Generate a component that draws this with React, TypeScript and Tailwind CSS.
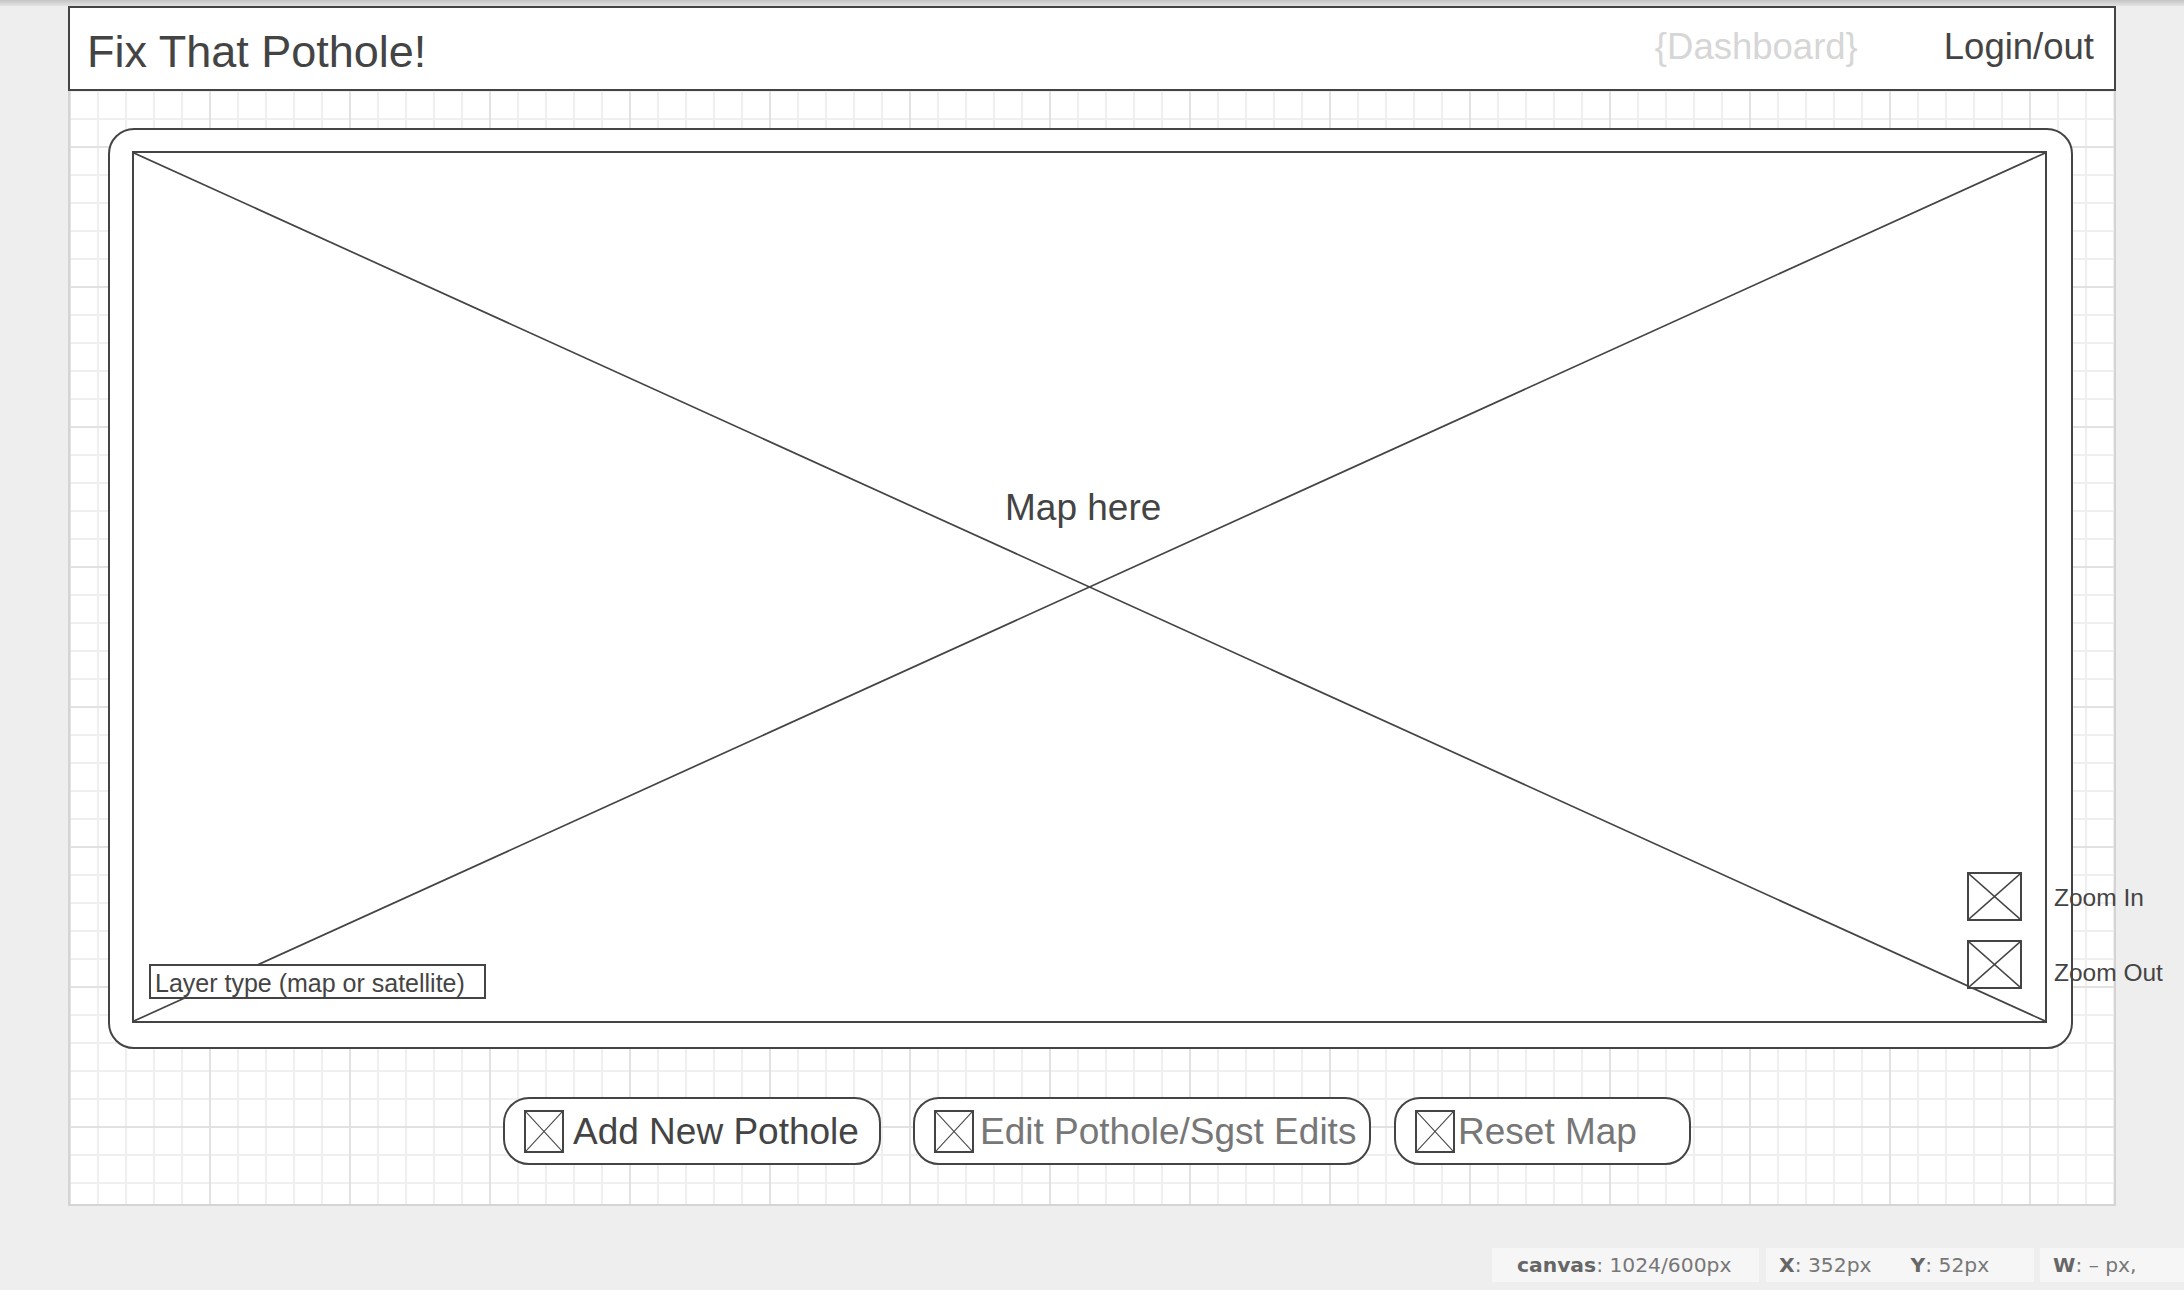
import React from 'react';

// wireframe placeholder "X" drawn corner to corner of its parent
function Cross({ stroke = 1.6 }: { stroke?: number }) {
  return (
    <svg
      className="absolute inset-0 h-full w-full"
      viewBox="0 0 100 100"
      preserveAspectRatio="none"
    >
      <line x1="0" y1="0" x2="100" y2="100" stroke="#444" strokeWidth={stroke} vectorEffect="non-scaling-stroke" />
      <line x1="100" y1="0" x2="0" y2="100" stroke="#444" strokeWidth={stroke} vectorEffect="non-scaling-stroke" />
    </svg>
  );
}

function IconBox({ className, stroke }: { className: string; stroke?: number }) {
  return (
    <div className={`relative shrink-0 border-2 border-[#444] bg-white ${className}`}>
      <Cross stroke={stroke} />
    </div>
  );
}

function ActionButton({
  label,
  className,
  textClass,
}: {
  label: string;
  className: string;
  textClass: string;
}) {
  return (
    <button
      type="button"
      className={`flex h-[68px] shrink-0 items-center rounded-[26px] border-2 border-[#444] bg-white pl-[19px] ${className}`}
    >
      <IconBox className="h-[43px] w-[40px]" stroke={1.1} />
      <span className={`whitespace-nowrap text-[37px] leading-none ${textClass}`}>{label}</span>
    </button>
  );
}

export default function App() {
  return (
    <div className="h-[1290px] w-[2184px] overflow-hidden bg-[#eeeeee] font-['Liberation_Sans',Arial,sans-serif] text-[#444]">
      <div className="h-[6px] bg-linear-to-b from-[#c4c4c4] to-[#e3e3e3]" />

      <div className="ml-[68px] w-[2048px]">
        <header className="flex h-[85px] items-start border-2 border-[#444] bg-white pl-[17px] pr-[20px] pt-[20px]">
          <h1 className="mt-[1px] text-[45px] font-normal leading-none">Fix That Pothole!</h1>
          <span className="ml-auto mt-[1px] text-[36.5px] leading-none text-[#d6d6d6]">{'{Dashboard}'}</span>
          <span className="ml-[86px] mt-[1px] text-[36.5px] leading-none">Login/out</span>
        </header>

        <main className="h-[1115px] border-x-2 border-b-2 border-[#d4d4d4] bg-white bg-[linear-gradient(to_right,#e2e2e2_2px,transparent_2px),linear-gradient(to_bottom,#e2e2e2_2px,transparent_2px),linear-gradient(to_right,#efefef_2px,transparent_2px),linear-gradient(to_bottom,#efefef_2px,transparent_2px)] bg-[size:140px_140px,140px_140px,28px_28px,28px_28px] bg-[position:-1px_55px] pl-[38px] pt-[37px]">
          <section className="h-[921px] w-[1965px] rounded-[26px] border-2 border-[#444] bg-white pb-[24px] pl-[22px] pr-[24px] pt-[21px]">
            <div className="relative h-full w-full border-2 border-[#444] bg-white">
              <Cross stroke={1.7} />

              <span className="absolute left-[871px] top-[336px] whitespace-nowrap text-[37px] leading-none">
                Map here
              </span>

              <div className="absolute left-[15px] top-[811px] h-[35px] w-[337px] border-2 border-[#444] bg-white pl-[4px] pt-[5px] text-[25px] leading-none whitespace-nowrap">
                Layer type (map or satellite)
              </div>

              <IconBox className="absolute! left-[1833px] top-[719px] h-[49px] w-[55px]" stroke={1.6} />
              <IconBox className="absolute! left-[1833px] top-[787px] h-[49px] w-[55px]" stroke={1.6} />

              <span className="absolute left-[1920px] top-[733px] whitespace-nowrap text-[24.5px] leading-none">
                Zoom In
              </span>
              <span className="absolute left-[1920px] top-[808px] whitespace-nowrap text-[24.5px] leading-none">
                Zoom Out
              </span>
            </div>
          </section>

          <div className="ml-[395px] mt-[48px] flex">
            <ActionButton label="Add New Pothole" className="w-[378px]" textClass="ml-[9px] text-[#444]" />
            <ActionButton label="Edit Pothole/Sgst Edits" className="ml-[32px] w-[458px]" textClass="ml-[6px] text-[#777]" />
            <ActionButton label="Reset Map" className="ml-[23px] w-[297px]" textClass="ml-[3px] text-[#777]" />
          </div>
        </main>
      </div>

      <footer className="ml-[1492px] mt-[42px] flex h-[34px] font-['DejaVu_Sans',sans-serif] text-[20.3px] leading-none text-[#777]">
        <div className="flex w-[267px] shrink-0 items-center bg-[#f6f6f6] pl-[25px] whitespace-nowrap">
          <b className="font-bold text-[#666]">canvas</b>: 1024/600px
        </div>
        <div className="ml-[7px] flex w-[268px] shrink-0 items-center bg-[#f6f6f6] pl-[13px] whitespace-nowrap">
          <b className="font-bold text-[#666]">X</b>: 352px
          <b className="ml-[39px] font-bold text-[#666]">Y</b>: 52px
        </div>
        <div className="ml-[6px] flex w-[300px] shrink-0 items-center bg-[#f6f6f6] pl-[13px] whitespace-nowrap">
          <b className="font-bold text-[#666]">W</b>: – px,
          <b className="ml-[48px] font-bold text-[#666]">H</b>: – px
        </div>
      </footer>
    </div>
  );
}
